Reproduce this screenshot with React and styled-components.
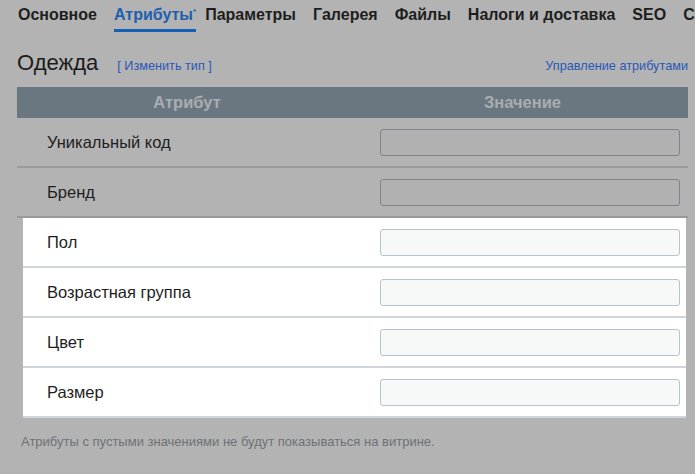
import React from "react";
import styled, { createGlobalStyle } from "styled-components";

const Global = createGlobalStyle`
  html, body { margin: 0; background: #b3b3b3; }
  body { font-family: "Liberation Sans", Arial, sans-serif; overflow: hidden; }
`;

const Page = styled.div`
  width: 695px;
  height: 474px;
  overflow: hidden;
  padding: 0 7px 0 17px;
  box-sizing: border-box;
`;

const Tabs = styled.div`
  display: flex;
  gap: 17px;
  white-space: nowrap;
  height: 34px;
  padding-top: 6px;
  box-sizing: border-box;
  margin-left: 1px;
`;

const Tab = styled.div`
  font-size: 16px;
  font-weight: bold;
  color: ${(p) => (p.$active ? "#1f5fae" : "#1e1e1e")};
  border-bottom: 3px solid ${(p) => (p.$active ? "#1460b6" : "transparent")};
  height: 26px;
  box-sizing: border-box;
  margin-right: ${(p) => (p.$active ? "-8px" : "0")};
  sup { font-size: 8px; color: #1f5fae; }
`;

const TitleRow = styled.div`
  display: flex;
  align-items: baseline;
  padding: 16px 0 0;
  height: 53px;
  box-sizing: border-box;
`;

const Title = styled.div`
  font-size: 22px;
  color: #1b1b1b;
  margin-right: 19px;
`;

const Link = styled.a`
  font-size: 12.7px;
  color: #2858b8;
  margin-left: ${(p) => (p.$right ? "auto" : "0")};
`;

const Table = styled.div`
  width: 671px;
`;

const Head = styled.div`
  display: grid;
  grid-template-columns: 340px 1fr;
  background: #6b7780;
  height: 31px;
  align-items: center;
  font-size: 16.5px;
  font-weight: bold;
  color: #a8adb1;
  text-align: center;
`;

const Row = styled.div`
  display: flex;
  align-items: center;
  justify-content: space-between;
  height: 50px;
  box-sizing: border-box;
  border-bottom: 2px solid ${(p) => (p.$lit ? "#cfd5db" : "#9a9a9a")};
  padding: ${(p) => (p.$lit ? "0 6px 0 24px" : "0 8px 0 30px")};
  background: ${(p) => (p.$lit ? "#fff" : "transparent")};
  margin: ${(p) => (p.$lit ? "0 2px 0 6px" : "0")};
`;

const Label = styled.div`
  font-size: 16.5px;
  color: #1e1e1e;
`;

const Input = styled.div`
  width: 300px;
  height: 27px;
  box-sizing: border-box;
  border-radius: 3px;
  border: 1px solid ${(p) => (p.$lit ? "#b7c3cc" : "#7e8489")};
  background: ${(p) => (p.$lit ? "#f7f9f9" : "#b1b1b1")};
`;

const Note = styled.div`
  font-size: 13px;
  color: #6e7277;
  padding: 16px 0 0 4px;
`;

const rows = [
  ["Уникальный код", false],
  ["Бренд", false],
  ["Пол", true],
  ["Возрастная группа", true],
  ["Цвет", true],
  ["Размер", true],
];

export default function App() {
  return (
    <Page>
      <Global />
      <Tabs>
        <Tab>Основное</Tab>
        <Tab $active>
          Атрибуты<sup>*</sup>
        </Tab>
        <Tab>Параметры</Tab>
        <Tab>Галерея</Tab>
        <Tab>Файлы</Tab>
        <Tab>Налоги и доставка</Tab>
        <Tab>SEO</Tab>
        <Tab>Статистика</Tab>
      </Tabs>
      <TitleRow>
        <Title>Одежда</Title>
        <Link>[ Изменить тип ]</Link>
        <Link $right>Управление атрибутами</Link>
      </TitleRow>
      <Table>
        <Head>
          <div>Атрибут</div>
          <div>Значение</div>
        </Head>
        {rows.map(([name, lit]) => (
          <Row key={name} $lit={lit}>
            <Label>{name}</Label>
            <Input $lit={lit} />
          </Row>
        ))}
      </Table>
      <Note>Атрибуты с пустыми значениями не будут показываться на витрине.</Note>
    </Page>
  );
}
